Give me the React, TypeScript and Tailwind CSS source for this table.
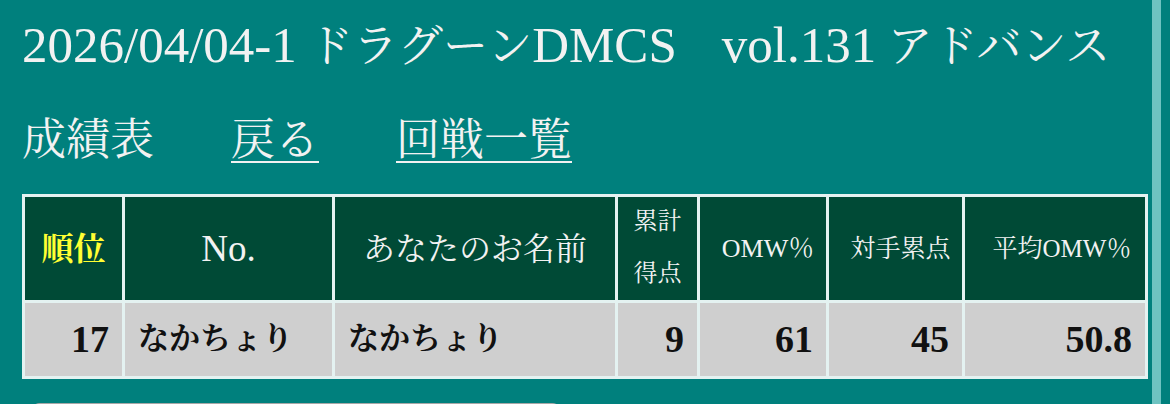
const serif = "font-['Liberation_Serif','Noto_Serif_CJK_JP','Noto_Sans_CJK_JP',serif]"

const headers = [
  { key: 'rank', label: '順位', className: 'text-[32px] font-bold text-[#ffff33]' },
  { key: 'no', label: 'No.', className: 'text-[37px]' },
  { key: 'name', label: 'あなたのお名前', className: 'text-[32px]' },
  { key: 'pts', label: '累計\n得点', className: 'text-[24px] leading-[52px] whitespace-pre-line text-center -mt-[4px]' },
  { key: 'omw', label: 'OMW％', className: 'text-[26px] pl-[10px]' },
  { key: 'opp', label: '対手累点', className: 'text-[25px] pl-[10px]' },
  { key: 'avg', label: '平均OMW％', className: 'text-[25px] pl-[14px]' },
]

const row = [
  { key: 'rank', value: '17', num: true },
  { key: 'no', value: 'なかちょり', num: false },
  { key: 'name', value: 'なかちょり', num: false },
  { key: 'pts', value: '9', num: true },
  { key: 'omw', value: '61', num: true },
  { key: 'opp', value: '45', num: true },
  { key: 'avg', value: '50.8', num: true },
]

export default function App() {
  return (
    <div className={`flex h-[404px] w-[1170px] overflow-hidden bg-[#00807d] text-[#f2f2f2] ${serif}`}>
      <main className="flex-1 pl-[22px]">
        <h1 className="pt-[17px] text-[45px] font-normal leading-[56px] whitespace-nowrap">
          <span className="text-[51px]">2026/04/04-1</span> ドラグーン
          <span className="text-[51px]">DMCS</span>　<span className="text-[51px]">vol.131</span> アドバンス
        </h1>

        <nav className="mt-[38px] flex gap-[77px] text-[44px] leading-[56px]">
          <span>成績表</span>
          <a href="#" className="underline decoration-[1.5px] underline-offset-[6px]">戻る</a>
          <a href="#" className="underline decoration-[1.5px] underline-offset-[6px]">回戦一覧</a>
        </nav>

        <div className="mt-[25px] grid w-fit grid-cols-[97px_207px_280px_79px_126px_133px_180px] grid-rows-[103px_73px] gap-[3px] bg-[#e4f2f1] p-[3px]">
          {headers.map((h) => (
            <div key={h.key} className="flex items-center justify-center bg-[#004a36]">
              <span className={h.className}>{h.label}</span>
            </div>
          ))}
          {row.map((c) => (
            <div
              key={c.key}
              className={`flex items-center bg-[#cfcfcf] px-[13px] font-bold text-[#111] ${
                c.num ? 'justify-end text-[38px]' : 'justify-start text-[31px]'
              }`}
            >
              {c.value}
            </div>
          ))}
        </div>

        <div className="mt-[24px] ml-[8px] h-[30px] w-[532px] rounded-t-[10px] border-t border-[#a8a8a8] bg-[#8a8a8a]" />
      </main>
      <div className="w-[9px] bg-[#6ec3c1]" />
      <div className="w-[9px]" />
    </div>
  )
}
